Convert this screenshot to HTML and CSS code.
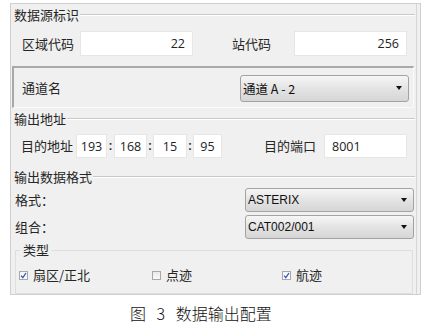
FILE: index.html
```html
<!DOCTYPE html>
<html>
<head>
<meta charset="utf-8">
<link rel="stylesheet" href="styles.css">
</head>
<body>
<div class="panel">
  <div class="sect"><span class="sect-title">数据源标识</span><span class="sect-line"></span></div>
  <div class="row row1">
    <span class="lbl lbl-area">区域代码</span>
    <span class="field field-r w113">22</span>
    <span class="lbl lbl-station">站代码</span>
    <span class="field field-r w113">256</span>
  </div>
  <div class="sunken">
    <span class="lbl">通道名</span>
    <div class="combo combo-ch"><span class="combo-text cjk">通道 A - 2</span><span class="arrow"></span></div>
  </div>
  <div class="sect sect2"><span class="sect-title">输出地址</span><span class="sect-line"></span></div>
  <div class="row row2">
    <span class="lbl lbl-dst">目的地址</span>
    <span class="field field-c ip1">193</span><span class="colon c1">:</span>
    <span class="field field-c ip2">168</span><span class="colon c2">:</span>
    <span class="field field-c ip3">15</span><span class="colon c3">:</span>
    <span class="field field-c ip4">95</span>
    <span class="lbl lbl-port">目的端口</span>
    <span class="field field-l port">8001</span>
  </div>
  <div class="sect sect3"><span class="sect-title">输出数据格式</span><span class="sect-line"></span></div>
  <div class="row row-fmt">
    <span class="lbl">格式：</span>
    <div class="combo combo-fmt"><span class="combo-text">ASTERIX</span><span class="arrow"></span></div>
  </div>
  <div class="row row-cmb">
    <span class="lbl">组合：</span>
    <div class="combo combo-fmt"><span class="combo-text">CAT002/001</span><span class="arrow"></span></div>
  </div>
  <fieldset class="group">
    <legend class="group-legend">类型</legend>
    <div class="checks">
      <label class="chk chk1"><span class="box checked"><svg width="7" height="7" viewBox="0 0 7 7"><path d="M1 3.6 L2.8 5.6 L6 1" fill="none" stroke="#2f56c4" stroke-width="1.3"/></svg></span><span class="chk-text">扇区/正北</span></label>
      <label class="chk chk2"><span class="box"></span><span class="chk-text">点迹</span></label>
      <label class="chk chk3"><span class="box checked"><svg width="7" height="7" viewBox="0 0 7 7"><path d="M1 3.6 L2.8 5.6 L6 1" fill="none" stroke="#2f56c4" stroke-width="1.3"/></svg></span><span class="chk-text">航迹</span></label>
    </div>
  </fieldset>
</div>
<div class="caption">图 3 数据输出配置</div>
</body>
</html>
```

FILE: styles.css
```css
html, body {
  margin: 0;
  padding: 0;
  background: #ffffff;
}
body {
  width: 429px;
  height: 327px;
  overflow: hidden;
  font-family: "Noto Sans CJK SC", "Noto Sans", sans-serif;
  font-size: 13px;
  color: #262626;
}
.panel {
  margin: 3px 0 0 10px;
  width: 409px;
  height: 290px;
  background: #f0f0f0;
  border: 1px solid #cfcfcf;
  box-shadow: inset -3px 0 0 #f0f0f0, inset -4px 0 0 #d6d6d6;
  display: flex;
  flex-direction: column;
}
.sect {
  display: flex;
  align-items: center;
  height: 22px;
  padding-left: 3px;
  padding-right: 5px;
}
.sect-title {
  line-height: 22px;
  white-space: nowrap;
  padding-right: 1px;
}
.sect-line {
  flex: 1;
  height: 1px;
  background: #c9c9c9;
  border-bottom: 1px solid #ffffff;
}
.row {
  display: flex;
  align-items: center;
}
.lbl {
  line-height: 18px;
  white-space: nowrap;
}
.field {
  background: #ffffff;
  border: 1px solid #e6e6e6;
  box-sizing: border-box;
  font-family: "Open Sans", "Noto Sans", sans-serif;
  font-size: 12.5px;
  color: #222;
  display: flex;
  align-items: center;
}
.field-r { justify-content: flex-end; padding-right: 7px; }
.field-c { justify-content: center; }
.field-l { justify-content: flex-start; padding-left: 7px; }
.row1 {
  margin-top: 5px;
  height: 25px;
  padding-left: 11px;
}
.row1 .field { height: 25px; }
.lbl-area { width: 58px; }
.w113 { width: 113px; }
.lbl-station { margin-left: 39px; width: 62px; }

.sunken {
  margin: 10px 6px 0 1px;
  height: 42px;
  box-sizing: border-box;
  border-top: 2px solid #a9a9a9;
  border-left: 2px solid #a9a9a9;
  border-right: 1px solid #fbfbfb;
  border-bottom: 1px solid #fbfbfb;
  display: flex;
  align-items: center;
  justify-content: space-between;
  padding: 1px 4px 0 8px;
}
.combo {
  box-sizing: border-box;
  border: 1px solid #a3a3a3;
  border-radius: 3px;
  background: linear-gradient(#f6f6f6, #e2e2e2 55%, #d6d6d6);
  display: flex;
  align-items: center;
  justify-content: space-between;
  padding: 0 6px 0 2px;
}
.combo-ch { width: 169px; height: 27px; }
.combo-fmt { width: 169px; height: 24px; }
.combo-text {
  font-family: "Liberation Sans", Arial, sans-serif;
  font-size: 12px;
  color: #111;
}
.combo-text.cjk {
  font-family: "Noto Sans CJK SC", "Noto Sans", sans-serif;
  font-size: 12.5px;
}
.arrow {
  width: 0;
  height: 0;
  border-left: 3px solid transparent;
  border-right: 3px solid transparent;
  border-top: 4px solid #111;
}
.sect2 { height: 22px; }
.row2 {
  margin-top: 4px;
  height: 24px;
  padding-left: 10px;
}
.row2 .field { height: 24px; }
.lbl-dst { width: 55px; }
.ip1 { width: 31px; }
.ip2 { width: 33px; }
.ip3 { width: 34px; }
.ip4 { width: 29px; }
.colon {
  text-align: center;
  font-family: "Liberation Sans", Arial, sans-serif;
  font-weight: bold;
  font-size: 12px;
  color: #333;
}
.c1 { width: 7px; }
.c2 { width: 6px; }
.c3 { width: 6px; }
.lbl-port { margin-left: 42px; width: 60px; }
.port { width: 83px; }

.sect3 { margin-top: 9px; height: 20px; }
.row-fmt {
  height: 25px;
  justify-content: space-between;
  padding: 0 6px 0 4px;
}
.row-cmb {
  margin-top: 3px;
  height: 24px;
  justify-content: space-between;
  padding: 0 6px 0 4px;
}
.group {
  margin: 4px 7px 0 4px;
  padding: 0 0 8px 0;
  border: 1px solid #dedede;
  min-width: 0;
}
.group-legend {
  margin-left: 4px;
  padding: 0 3px;
  line-height: 14px;
  font-size: 13px;
}
.checks {
  display: flex;
  align-items: center;
  height: 20px;
  padding-left: 3px;
  margin-top: 8px;
}
.chk {
  display: flex;
  align-items: center;
}
.chk1 { width: 133px; }
.chk2 { width: 130px; }
.box {
  width: 9px;
  height: 9px;
  box-sizing: border-box;
  border: 1px solid #a8a8a8;
  background: linear-gradient(#e9e9e9, #fafafa);
  display: flex;
  align-items: center;
  justify-content: center;
  margin-right: 5px;
}
.box.checked {
  background: linear-gradient(#f4f4f4, #ffffff);
}
.chk-text {
  line-height: 18px;
}
.caption {
  margin-top: 6px;
  padding-left: 130px;
  font-family: "Noto Sans CJK SC", sans-serif;
  font-weight: 300;
  font-size: 16px;
  word-spacing: 7px;
  line-height: 24px;
  color: #111;
}
```
